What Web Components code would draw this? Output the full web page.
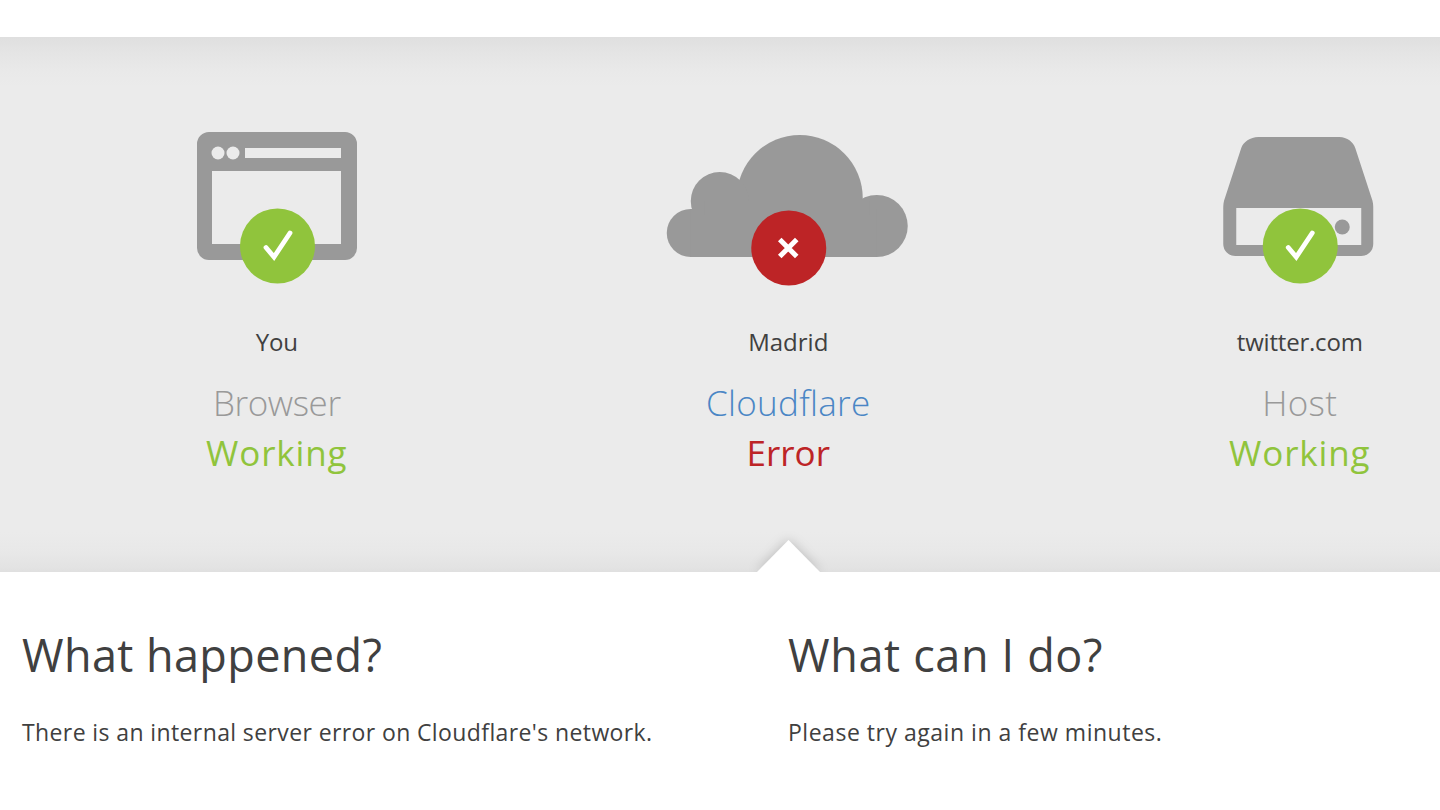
<!doctype html>
<html lang="en"><head><meta charset="utf-8"><title>Cloudflare error</title>
<style>
html,body{margin:0;padding:0;width:1440px;height:810px;overflow:hidden;background:#fff;font-family:"Open Sans","Liberation Sans",sans-serif;color:#404040}
cf-page{display:block;width:1440px;overflow:hidden}
</style></head><body>
<template id="t-item"><style>
:host{display:flex;flex-direction:column;align-items:center;flex:0 0 511.5px;width:511.5px}
.ic{display:block;height:160px;width:300px}
.ic ::slotted(svg){display:block}
.loc{margin-top:36px;font-size:24px;line-height:32px;color:#404040;letter-spacing:var(--ls0,-.15px)}
.name{margin-top:20px;font-size:35px;line-height:50px;font-weight:300;color:var(--name,#999);letter-spacing:var(--ls1,0)}
.st{font-size:35px;line-height:50px;font-weight:400;color:var(--st,#90c43c);letter-spacing:var(--ls2,.85px)}
</style><div class="ic"><slot></slot></div><div class="loc"></div><div class="name"></div><div class="st"></div></template>
<template id="t-col"><style>
:host{display:block;box-sizing:border-box}
h2{margin:0;font-size:45px;line-height:60px;font-weight:400;color:#404040;letter-spacing:var(--hs,.4px)}
p{margin:31px 0 0;font-size:23px;line-height:32px;color:#404040;letter-spacing:var(--ps,.39px)}
</style><h2></h2><p><slot></slot></p></template>
<template id="t-band"><style>
:host{display:block;position:relative;margin-top:37px;height:535px;background:linear-gradient(#dfdfdf 0,#e4e4e4 14px,#e9e9e9 34px,#ebebeb 50px,#ebebeb 495px,#e8e8e8 515px,#e3e3e3 530px,#e0e0e0 535px)}
.row{display:flex;padding:93px 0 0 21px;width:1534.5px}
.notch{position:absolute;left:757px;bottom:0;width:63px;height:32px;filter:drop-shadow(0 0 6px rgba(0,0,0,.2))}
.notch i{display:block;width:100%;height:100%;background:#fff;clip-path:polygon(50% 0,100% 100%,0 100%)}
</style><div class="row"><slot></slot></div><div class="notch"><i></i></div></template>
<template id="t-info"><style>
:host{display:flex;position:relative;background:#fff;height:238px;padding:53px 0 0 22px;box-sizing:border-box}
::slotted(cf-col){flex:0 0 766px}
</style><slot></slot></template>

<cf-page>
<cf-band>
<cf-item loc="You" name="Browser" st="Working" style="--ls1:-.4px">
<svg width="300" height="160" viewBox="127 130 300 160" aria-hidden="true"><path fill="#999" fill-rule="evenodd" d="M209 132h136a12 12 0 0 1 12 12v104a12 12 0 0 1-12 12H209a12 12 0 0 1-12-12V144a12 12 0 0 1 12-12zM212 171v73h129v-73zM245 148v10h96v-10z"/><circle cx="218" cy="153" r="6.5" fill="#ebebeb"/><circle cx="233" cy="153" r="6.5" fill="#ebebeb"/><circle cx="277.5" cy="246" r="37.5" fill="#90c43c"/><path d="M266 247.500 274 257 290 233" fill="none" stroke="#fff" stroke-width="4.800" stroke-linecap="round"/></svg>
</cf-item>
<cf-item loc="Madrid" name="Cloudflare" st="Error" style="--name:#4a86c5;--st:#bd2426;--ls1:.3px;--ls2:0;--ls0:0">
<svg width="300" height="160" viewBox="638.250 130 300 160" aria-hidden="true"><g fill="#999"><circle cx="800" cy="198" r="63"/><circle cx="720" cy="201" r="29"/><circle cx="691" cy="233" r="24"/><circle cx="877" cy="226" r="31"/><path d="M691 209H877V257H691z"/><path d="M705 201H870V215H705z"/></g><circle cx="789" cy="248" r="37.500" fill="#bd2426"/><path d="M780 239.500 797 256.500M797 239.500 780 256.500" stroke="#fff" stroke-width="5"/></svg>
</cf-item>
<cf-item loc="twitter.com" name="Host" st="Working" style="--ls1:.3px;--ls0:-.2px">
<svg width="300" height="160" viewBox="1149.750 130 300 160" aria-hidden="true"><path fill="#999" fill-rule="evenodd" d="M1258 137h81c8 0 14 5 16 11l16 49c2 5 2 8 2 12v35a12 12 0 0 1-12 12h-126a12 12 0 0 1-12-12v-35c0-4 0-7 2-12l16-49c2-6 9-11 17-11zM1236 208v37h125v-37z"/><circle cx="1342" cy="227" r="7.500" fill="#999"/><circle cx="1300" cy="246" r="37.500" fill="#90c43c"/><path d="M1288 247.500 1296 257 1312 233" fill="none" stroke="#fff" stroke-width="4.800" stroke-linecap="round"/></svg>
</cf-item>
</cf-band>
<cf-info>
<cf-col title-text="What happened?">There is an internal server error on Cloudflare's network.</cf-col>
<cf-col title-text="What can I do?" style="--hs:.65px;--ps:.52px">Please try again in a few minutes.</cf-col>
</cf-info>
</cf-page>
<script>
function mk(id){const r=this.attachShadow({mode:'open'});r.appendChild(document.getElementById(id).content.cloneNode(true));return r}
class CfBand extends HTMLElement{constructor(){super();mk.call(this,'t-band')}}
class CfInfo extends HTMLElement{constructor(){super();mk.call(this,'t-info')}}
class CfItem extends HTMLElement{connectedCallback(){const r=this.shadowRoot||mk.call(this,'t-item');r.querySelector('.loc').textContent=this.getAttribute('loc');r.querySelector('.name').textContent=this.getAttribute('name');r.querySelector('.st').textContent=this.getAttribute('st')}}
class CfCol extends HTMLElement{connectedCallback(){const r=this.shadowRoot||mk.call(this,'t-col');r.querySelector('h2').textContent=this.getAttribute('title-text')}}
customElements.define('cf-band',CfBand);customElements.define('cf-info',CfInfo);customElements.define('cf-item',CfItem);customElements.define('cf-col',CfCol);
</script>
</body></html>
